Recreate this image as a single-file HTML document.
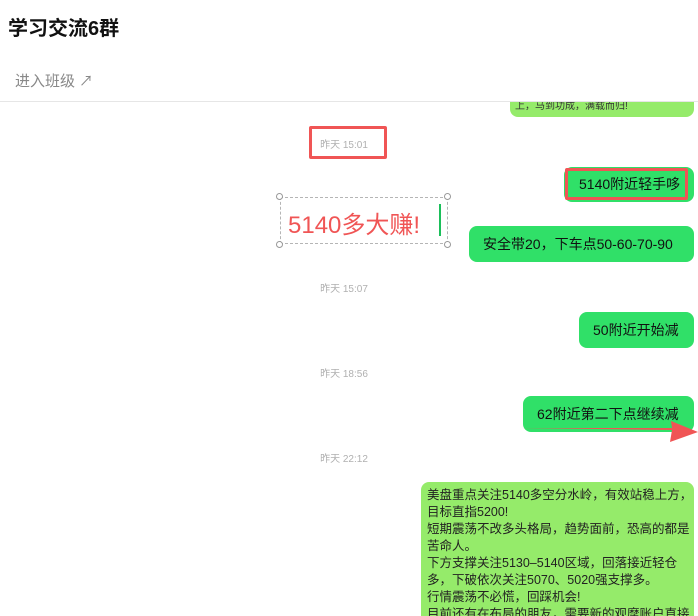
<!DOCTYPE html>
<html><head><meta charset="utf-8"><style>
*{margin:0;padding:0;box-sizing:border-box}
html,body{width:698px;height:616px;overflow:hidden}
body{background:#fff;font-family:"Liberation Sans","Noto Sans CJK SC",sans-serif;position:relative}
.a{position:absolute;white-space:nowrap}
.t{font-size:10px;color:#b0b0b0;width:100px;text-align:center;left:294px}
.g{background:#30e068;border-radius:8px;font-size:14px;color:#111;padding:0 14px;line-height:36px;height:36px}
</style></head><body>
<div class="a" style="left:8px;top:12px;font-size:20px;font-weight:bold;color:#111">学习交流6群</div>
<div class="a" style="left:15px;top:70px;font-size:15px;color:#888">进入班级 <span style="font-size:14px">↗</span></div>

<div class="a" style="left:510px;top:80px;width:184px;height:37px;background:#95eb6a;border-radius:8px;font-size:10px;color:#333;padding:6px 5px 0;line-height:14px;overflow:hidden">上方支撑有效，回踩即是机会，马<br>上，马到功成，满载而归!</div>
<div class="a" style="left:0;top:60px;width:698px;height:41px;background:#fff"></div>
<div class="a" style="left:15px;top:70px;font-size:15px;color:#888">进入班级 <span style="font-size:14px">↗</span></div>
<div class="a" style="left:0;top:101px;width:698px;height:1px;background:#e6e6e6"></div>

<div class="a" style="left:309px;top:126px;width:78px;height:33px;border:3px solid #f05555;border-radius:2px"></div>
<div class="a t" style="top:136px">昨天 15:01</div>

<div class="a g" style="left:564px;top:167px;width:130px;height:35px;padding:0"></div>
<div class="a" style="left:565px;top:168px;width:123px;height:32px;border:3px solid #f05555;border-radius:2px;font-size:14px;color:#111;line-height:26px;padding-left:11px">5140附近轻手哆</div>

<div class="a" style="left:280px;top:197px;width:168px;height:47px;border:1px dashed #b5b5b5"></div>
<div class="a" style="left:276px;top:193px;width:7px;height:7px;border:1px solid #999;border-radius:50%;background:#fff"></div>
<div class="a" style="left:444px;top:193px;width:7px;height:7px;border:1px solid #999;border-radius:50%;background:#fff"></div>
<div class="a" style="left:276px;top:241px;width:7px;height:7px;border:1px solid #999;border-radius:50%;background:#fff"></div>
<div class="a" style="left:444px;top:241px;width:7px;height:7px;border:1px solid #999;border-radius:50%;background:#fff"></div>
<div class="a" style="left:288px;top:205px;font-size:24px;color:#f05555">5140多大赚!</div>
<div class="a" style="left:439px;top:204px;width:2px;height:32px;background:#1bbf5a"></div>

<div class="a g" style="left:469px;top:226px;width:225px">安全带20，下车点50-60-70-90</div>
<div class="a t" style="top:280px">昨天 15:07</div>
<div class="a g" style="left:579px;top:312px;width:115px">50附近开始减</div>
<div class="a t" style="top:365px">昨天 18:56</div>
<div class="a g" style="left:523px;top:396px;width:171px">62附近第二下点继续减</div>
<svg class="a" style="left:0;top:0" width="698" height="616"><path d="M522 428 L672 430 L670 442 L698 432 L671 421 L672 428 Z" fill="#f05555"/></svg>
<div class="a t" style="top:450px">昨天 22:12</div>

<div class="a" style="left:421px;top:482px;width:273px;height:150px;background:#95eb6a;border-radius:8px;font-size:12.5px;color:#222;line-height:17px;padding:5px 6px;overflow:hidden">美盘重点关注5140多空分水岭，有效站稳上方，<br>目标直指5200!<br>短期震荡不改多头格局，趋势面前，恐高的都是<br>苦命人。<br>下方支撑关注5130–5140区域，回落接近轻仓<br>多，下破依次关注5070、5020强支撑多。<br>行情震荡不必慌，回踩机会!<br>目前还有在布局的朋友，需要新的观摩账户直接</div>
</body></html>
